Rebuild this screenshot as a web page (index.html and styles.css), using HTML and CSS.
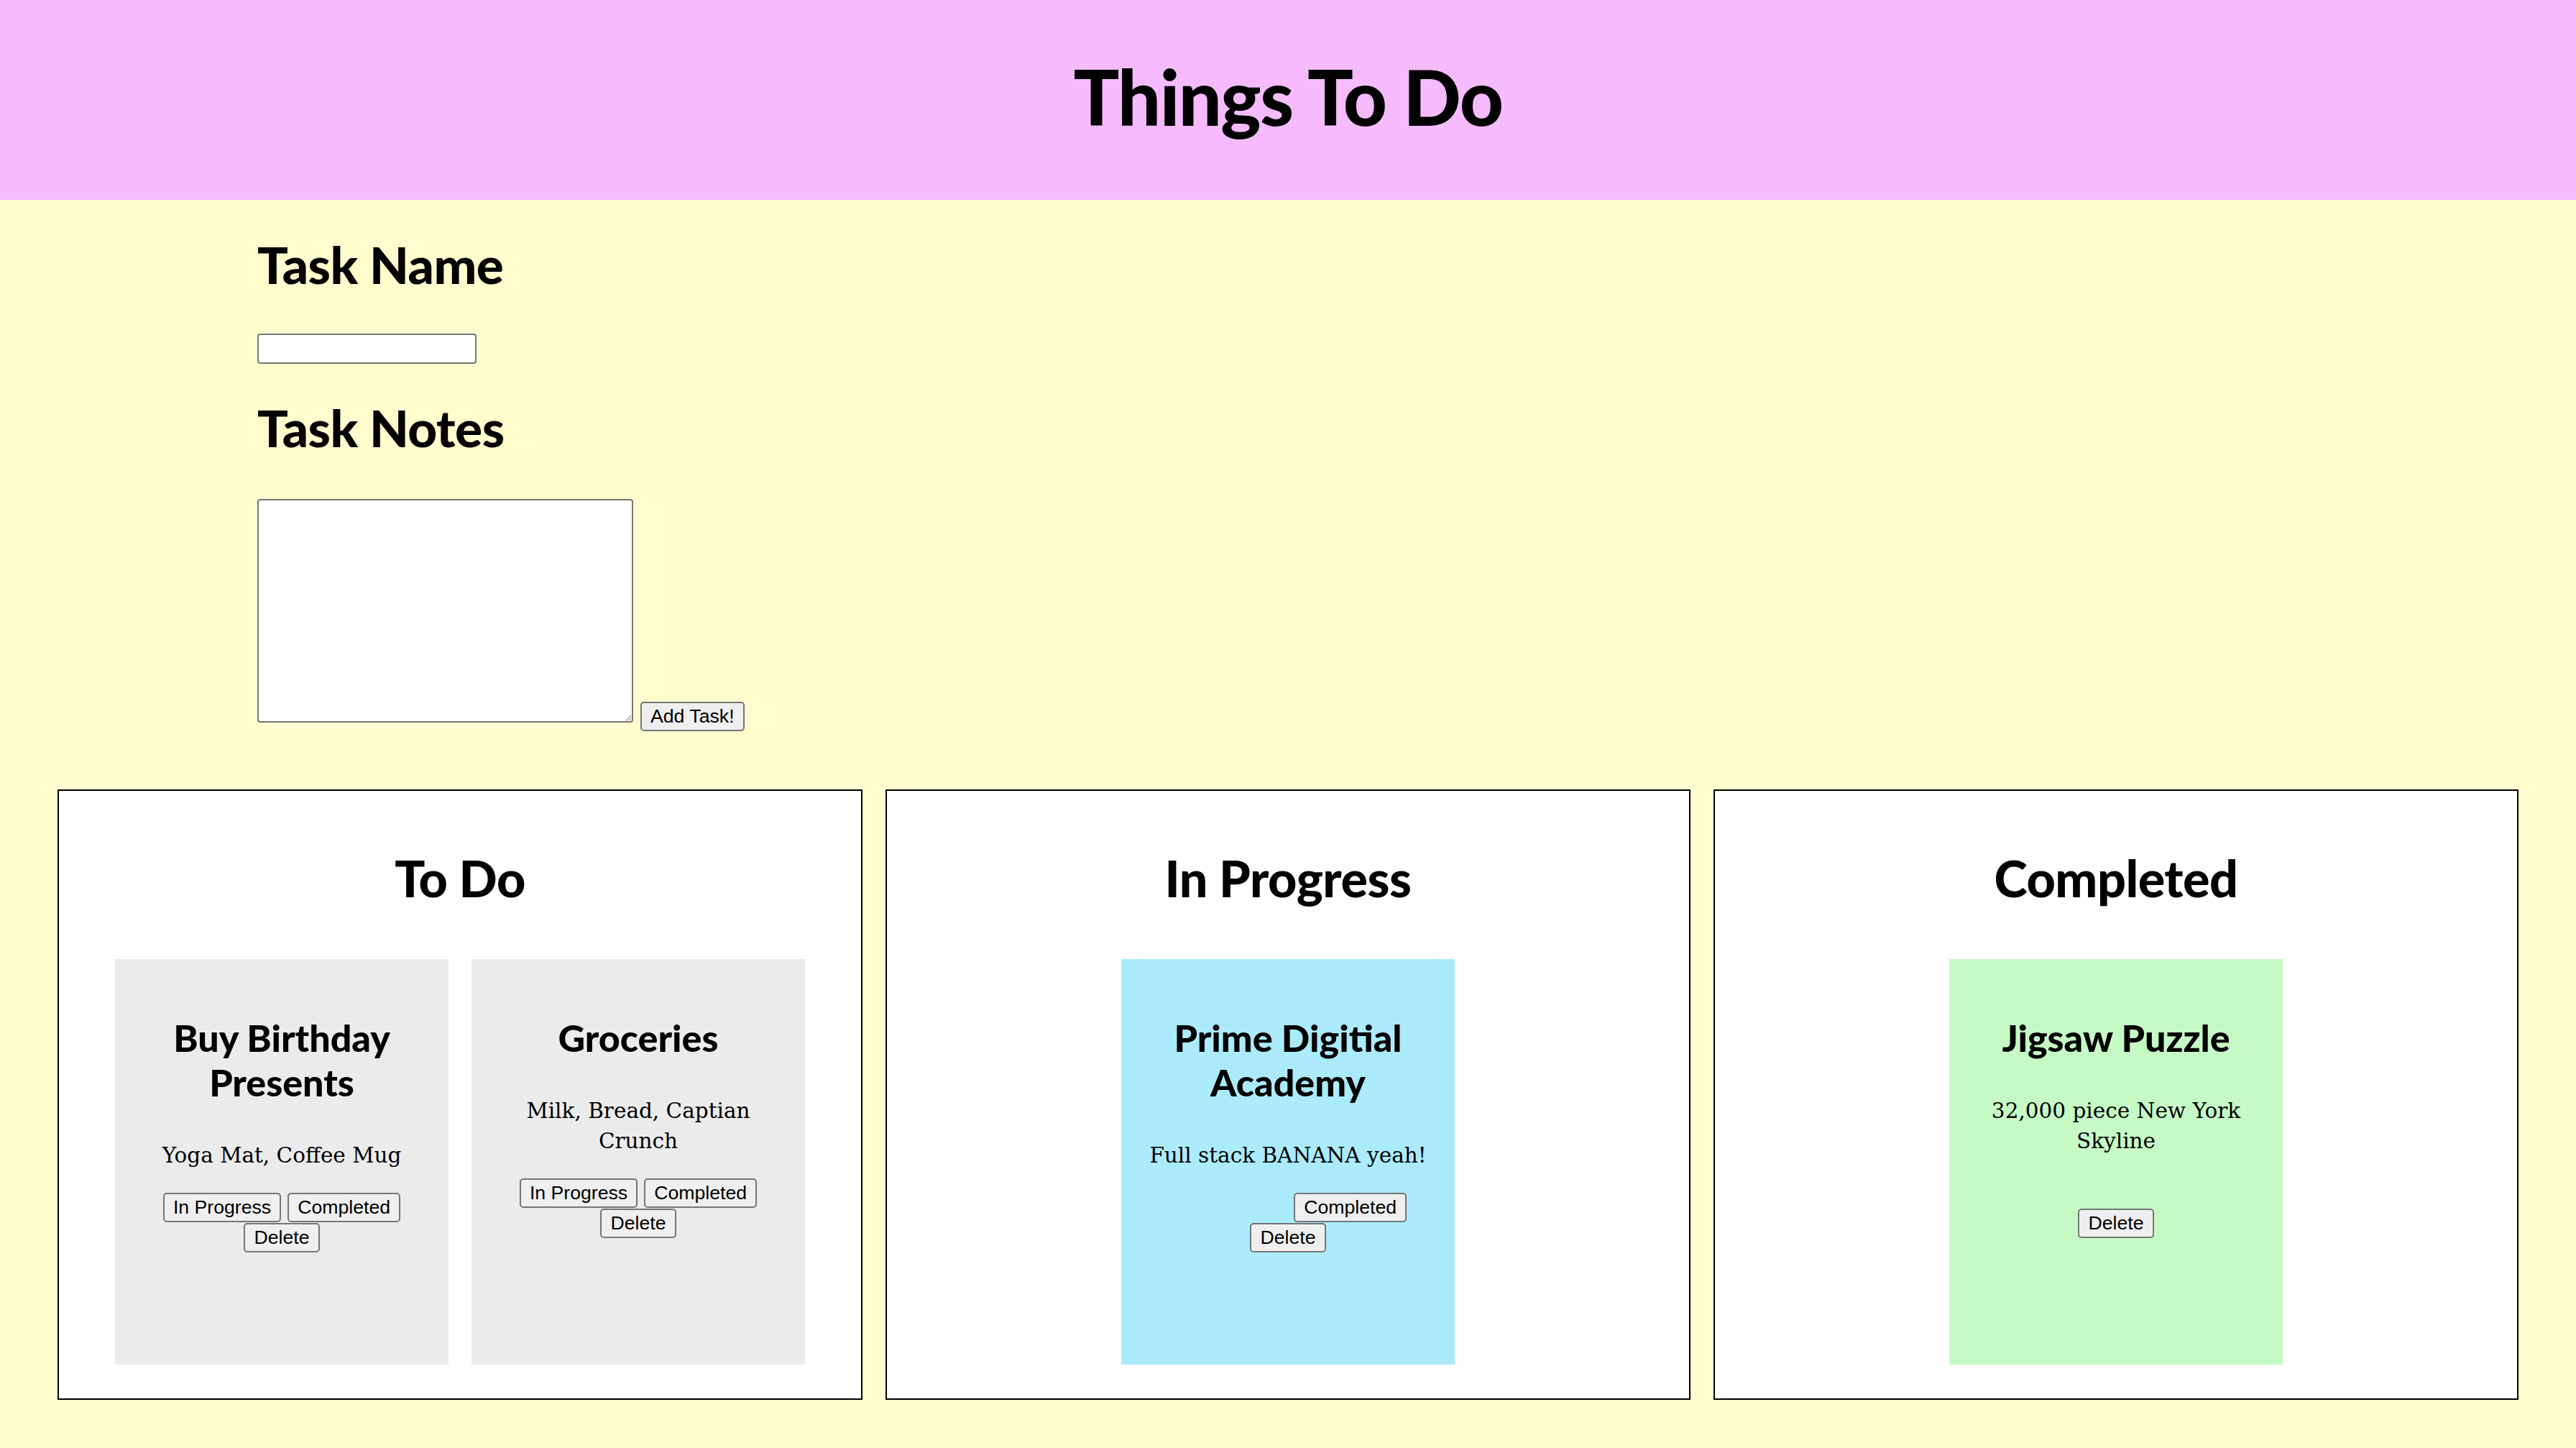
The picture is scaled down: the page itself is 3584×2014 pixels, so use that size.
FILE: index.html
```html
<!DOCTYPE html>
<html lang="en">
<head>
<meta charset="utf-8">
<title>Things To Do</title>
<link rel="stylesheet" href="styles.css">
</head>
<body>
<header class="topbar">
  <h1 class="title">Things To Do</h1>
</header>
<main class="page">
  <section class="task-form">
    <h2 class="field-label">Task Name</h2>
    <input class="name-input" type="text">
    <h2 class="field-label notes-label">Task Notes</h2>
    <div class="notes-row">
      <textarea class="notes-input"></textarea>
      <button class="btn add-btn">Add Task!</button>
    </div>
  </section>

  <section class="board">
    <div class="column">
      <h2 class="column-title">To Do</h2>
      <div class="cards">
        <div class="card card-todo">
          <h3 class="card-title">Buy Birthday Presents</h3>
          <p class="card-notes">Yoga Mat, Coffee Mug</p>
          <div class="card-actions">
            <button class="btn">In Progress</button>
            <button class="btn">Completed</button>
            <button class="btn">Delete</button>
          </div>
        </div>
        <div class="card card-todo">
          <h3 class="card-title">Groceries</h3>
          <p class="card-notes">Milk, Bread, Captian Crunch</p>
          <div class="card-actions">
            <button class="btn">In Progress</button>
            <button class="btn">Completed</button>
            <button class="btn">Delete</button>
          </div>
        </div>
      </div>
    </div>

    <div class="column">
      <h2 class="column-title">In Progress</h2>
      <div class="cards">
        <div class="card card-progress">
          <h3 class="card-title">Prime Digitial Academy</h3>
          <p class="card-notes">Full stack BANANA yeah!</p>
          <div class="card-actions">
            <button class="btn is-hidden">In Progress</button>
            <button class="btn">Completed</button>
            <button class="btn">Delete</button>
          </div>
        </div>
      </div>
    </div>

    <div class="column">
      <h2 class="column-title">Completed</h2>
      <div class="cards">
        <div class="card card-done">
          <h3 class="card-title">Jigsaw Puzzle</h3>
          <p class="card-notes">32,000 piece New York Skyline</p>
          <div class="card-actions">
            <button class="btn is-hidden">In Progress</button>
            <button class="btn is-hidden">Completed</button>
            <button class="btn">Delete</button>
          </div>
        </div>
      </div>
    </div>
  </section>
</main>
</body>
</html>
```

FILE: styles.css
```css
* {
  box-sizing: border-box;
}

html, body {
  margin: 0;
  padding: 0;
}

body {
  background: #fffdcd;
  color: #000;
  font-family: "DejaVu Serif", "Liberation Serif", serif;
  min-height: 2014px;
}

.topbar {
  background: #f5bbfc;
  height: 278px;
  padding-top: 71px;
}

.title {
  margin: 0;
  text-align: center;
  font-family: Lato, "Open Sans", sans-serif;
  font-weight: 900;
  font-size: 106px;
  line-height: 126px;
  letter-spacing: -1.5px;
}

.task-form {
  padding-left: 358px;
}

.field-label {
  margin: 48px 0 0;
  font-family: Lato, "Open Sans", sans-serif;
  font-weight: 900;
  font-size: 71px;
  line-height: 84px;
  letter-spacing: -0.5px;
}

.notes-label {
  margin-top: 47px;
}

.name-input {
  display: block;
  margin: 54px 0 0;
  width: 305px;
  height: 42px;
  border: 2px solid #767676;
  border-radius: 4px;
  background: #fff;
}

.notes-row {
  display: flex;
  align-items: flex-end;
  gap: 10px;
  margin-top: 57px;
}

.notes-input {
  display: block;
  margin: 0;
  width: 523px;
  height: 311px;
  border: 2px solid #767676;
  border-radius: 4px;
  background: #fff;
}

.btn {
  margin: 0;
  height: 41px;
  padding: 0 12px;
  border: 2px solid #767676;
  border-radius: 5px;
  background: #efefef;
  color: #000;
  font-family: "Liberation Sans", Arial, sans-serif;
  font-size: 26.67px;
  line-height: 37px;
}

.add-btn {
  margin-bottom: -12px;
}

.board {
  display: grid;
  grid-template-columns: repeat(3, 1fr);
  gap: 32px;
  padding: 0 80px;
  margin-top: 93px;
}

.column {
  height: 849px;
  border: 2px solid #000;
  background: #fff;
  padding-top: 79px;
}

.column-title {
  margin: 0;
  text-align: center;
  font-family: Lato, "Open Sans", sans-serif;
  font-weight: 900;
  font-size: 70px;
  line-height: 84px;
  letter-spacing: -0.5px;
}

.cards {
  display: flex;
  justify-content: center;
  gap: 32px;
  margin-top: 71px;
}

.card {
  width: 464px;
  height: 564px;
  padding: 78px 32px 0;
  text-align: center;
}

.card-todo {
  background: #ebebeb;
}

.card-progress {
  background: #abebfb;
}

.card-done {
  background: #c5fac5;
}

.card-title {
  margin: 0;
  font-family: Lato, "Open Sans", sans-serif;
  font-weight: 900;
  font-size: 52px;
  line-height: 62px;
}

.card-notes {
  margin: 50px 0 31px;
  font-size: 29.5px;
  line-height: 42px;
}

.card-actions {
  display: flex;
  flex-wrap: wrap;
  justify-content: center;
  gap: 1px 9px;
}

.is-hidden {
  visibility: hidden;
}
```
